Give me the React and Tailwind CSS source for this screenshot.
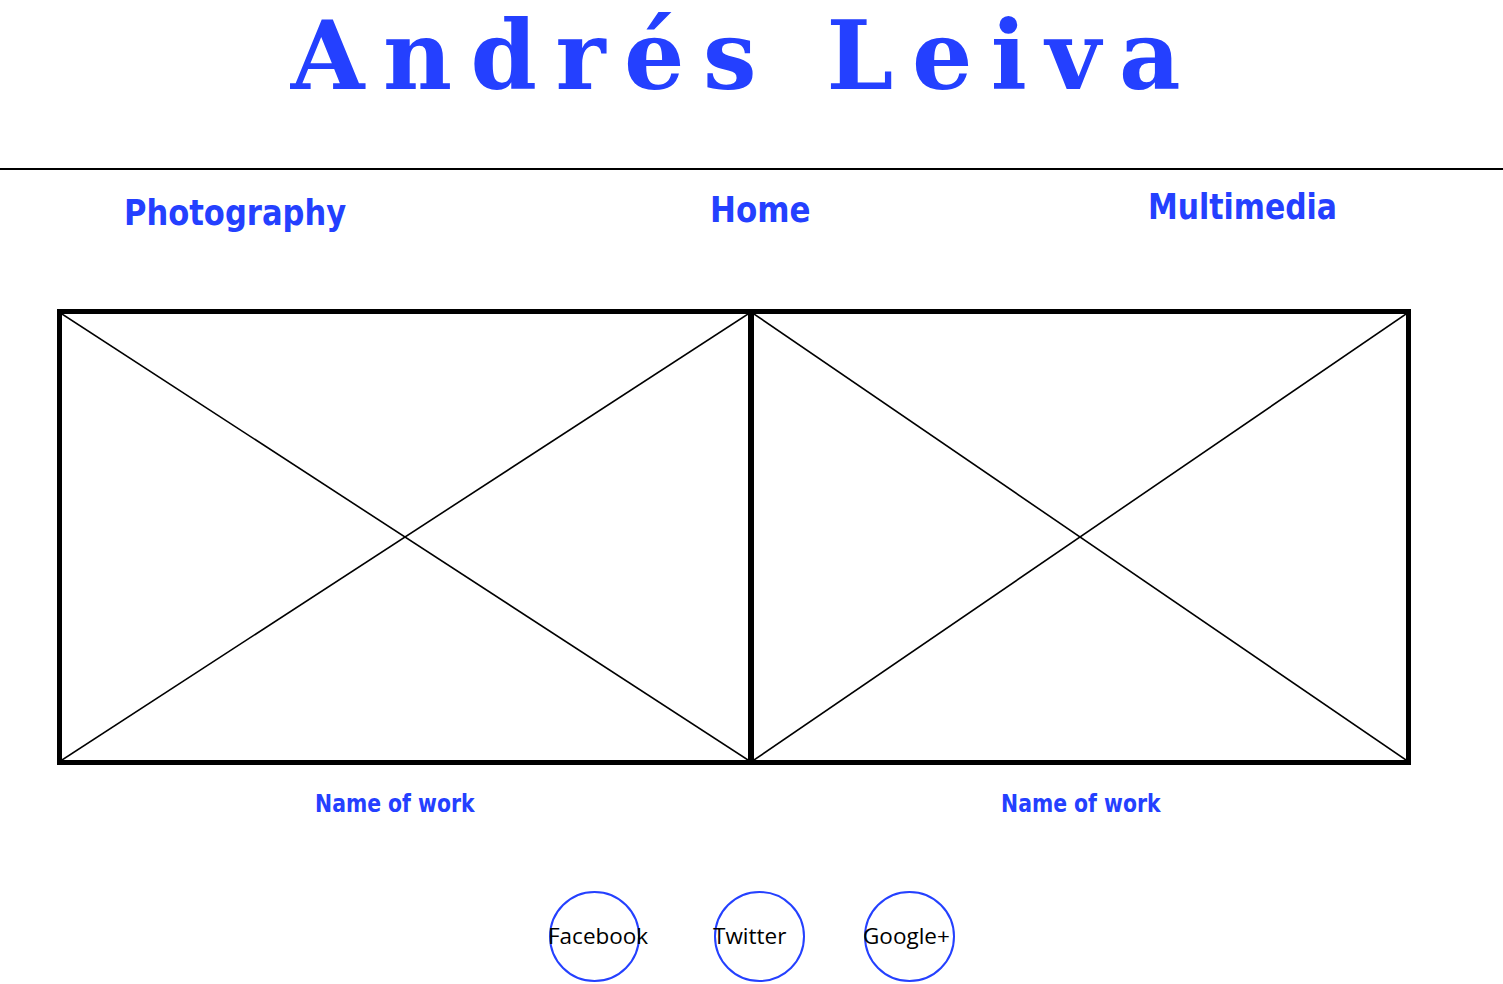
import React from "react";

const BLUE = "text-[#2440ff]";

function Placeholder({ className }) {
  return (
    <div className={`relative border-[5px] border-black ${className}`}>
      <svg className="absolute inset-0 w-full h-full" viewBox="0 0 100 100" preserveAspectRatio="none">
        <line x1="0" y1="0" x2="100" y2="100" stroke="black" strokeWidth="1.6" vectorEffect="non-scaling-stroke" />
        <line x1="100" y1="0" x2="0" y2="100" stroke="black" strokeWidth="1.6" vectorEffect="non-scaling-stroke" />
      </svg>
    </div>
  );
}

function Social({ label, className = "" }) {
  return (
    <div className={`w-[91px] h-[91px] rounded-full border-2 border-[#2440ff] flex items-center shrink-0 ${className}`}>
      <span className="-ml-[3px] whitespace-nowrap text-black text-[22.5px] leading-none font-['Open_Sans',sans-serif]">
        {label}
      </span>
    </div>
  );
}

export default function App() {
  const navFont = "font-['DejaVu_Sans',Verdana,sans-serif] font-bold";
  return (
    <div className="w-[1503px] h-[984px] bg-white overflow-hidden">
      {/* Header */}
      <div className="h-[168px] flex justify-center">
        <h1 className={`${BLUE} font-['DejaVu_Serif','Liberation_Serif',serif] font-bold text-[95px] leading-[111px] tracking-[18.5px] whitespace-pre -ml-[13px]`}>
          Andrés Leiva
        </h1>
      </div>
      <div className="border-t-2 border-black" />

      {/* Nav */}
      <nav className={`h-[139px] flex items-start pl-[124px] ${navFont} ${BLUE} text-[36px] leading-none`}>
        <div className="w-[586px] mt-[25px]">
          <span className="inline-block origin-left scale-x-[0.85]">Photography</span>
        </div>
        <div className="w-[438px] mt-[22px]">
          <span className="inline-block origin-left scale-x-[0.86]">Home</span>
        </div>
        <div className="mt-[19px]">
          <span className="inline-block origin-left scale-x-[0.83]">Multimedia</span>
        </div>
      </nav>

      {/* Gallery */}
      <div className="flex pl-[57px]">
        <Placeholder className="w-[696px] h-[456px]" />
        <Placeholder className="w-[662px] h-[456px] -ml-[4px]" />
      </div>

      {/* Names */}
      <div className={`flex pl-[57px] mt-[27px] ${navFont} ${BLUE} text-[24px] leading-none`}>
        <div className="w-[676px] text-center">
          <span className="inline-block scale-x-[0.85]">Name of work</span>
        </div>
        <div className="w-[696px] text-center">
          <span className="inline-block scale-x-[0.85]">Name of work</span>
        </div>
      </div>

      {/* Social */}
      <div className="flex pl-[549px] mt-[75px]">
        <Social label="Facebook" />
        <Social label="Twitter" className="ml-[74px]" />
        <Social label="Google+" className="ml-[59px]" />
      </div>
    </div>
  );
}
